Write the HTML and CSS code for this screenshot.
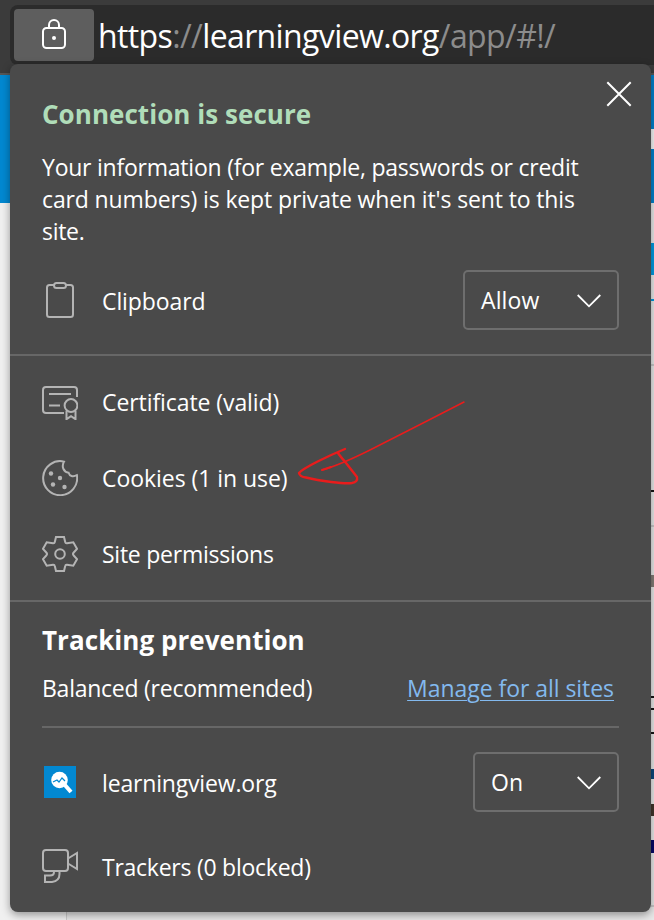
FILE: index.html
```html
<!DOCTYPE html>
<html lang="en">
<head>
<meta charset="utf-8">
<title>Site information</title>
<link rel="stylesheet" href="styles.css">
</head>
<body>
<header class="toolbar">
  <div class="address">
    <button class="lock" aria-label="View site information">
      <svg width="24" height="30" viewBox="0 0 24 30" fill="none" stroke="#fff" stroke-width="2"><rect x="1" y="9" width="22" height="20" rx="3.5"/><path d="M7 9V6a5 5 0 0 1 10 0v3"/><circle cx="12" cy="19" r="2" fill="#fff" stroke="none"/></svg>
    </button>
    <span class="url">https<i>://</i>learningview.org<i>/app/#!/</i></span>
  </div>
</header>
<main class="page">
  <div class="page-left"><div class="banner"></div></div>
  <div class="page-right">
    <div class="blue b1"></div><div class="white"></div><div class="blue b1"></div>
    <div class="gap g1"></div><div class="cyan"></div><div class="gap g2"></div><div class="cyan-line"></div>
    <div class="gap g3"></div><div class="gray-line"></div><div class="gap g4"></div><div class="ink"></div>
    <div class="gap g5"></div><div class="gray-line"></div><div class="gap g6"></div><div class="photo"></div>
    <div class="gap g7"></div><div class="ink"></div><div class="gap g8"></div><div class="ink"></div>
    <div class="gap g9"></div><div class="ink"></div><div class="gap g10"></div><div class="ink navy"></div>
    <div class="gap g11"></div><div class="ink gold"></div><div class="gap g12"></div><div class="ink deep"></div>
    <div class="gap g13"></div><div class="gray-line"></div>
  </div>
</main>

<section class="popup">
  <div class="summary">
    <div class="title-row">
      <h1>Connection is secure</h1>
      <svg class="close" width="26" height="26" viewBox="0 0 26 26" stroke="#fff" stroke-width="2"><path d="M1.3 1.3l23.4 23.4M24.7 1.3L1.3 24.7"/></svg>
    </div>
    <p><span class="l1">Your information (for example, passwords or credit</span><br><span class="l2">card numbers) is kept private when it's sent to this</span><br><span class="l3">site.</span></p>
    <div class="row clip-row">
      <svg class="icon" width="36" height="36" viewBox="0 0 36 36"><rect x="5" y="3" width="26" height="32" rx="2.5"/><rect x="12" y="1" width="12" height="5" rx="2.5" fill="#4a4a4a"/></svg>
      <span class="t-clip">Clipboard</span>
      <div class="select allow"><span>Allow</span><svg width="24" height="14" viewBox="0 0 24 14"><path d="M.7 1L12 12.3 23.3 1"/></svg></div>
    </div>
  </div>
  <div class="links">
    <div class="row">
      <svg class="icon" width="36" height="36" viewBox="0 0 36 36"><path d="M35 13V6a3 3 0 0 0-3-3H4a3 3 0 0 0-3 3v20a3 3 0 0 0 3 3h18M7 10h22M7 21.500h11"/><circle cx="29" cy="21.500" r="6.400"/><path d="M24.500 27v8.200l4.500-3 4.500 3V27"/></svg>
      <span class="t-cert">Certificate (valid)</span>
    </div>
    <div class="row">
      <svg class="icon" width="36" height="36" viewBox="0 0 36 36"><path d="M22 1.600A17 17 0 1 0 34.900 15.200c-4 2-7.300 1-8.300-2.500C22 12.200 19 7 22 1.600Z"/><g class="dots"><circle cx="9" cy="13.500" r="2.200"/><circle cx="18" cy="18" r="2.200"/><circle cx="11" cy="24.500" r="2.200"/><circle cx="22.500" cy="27" r="2.200"/></g></svg>
      <span class="t-cookie">Cookies (1 in use)</span>
    </div>
    <div class="row">
      <svg class="icon" width="36" height="36" viewBox="0 0 36 36"><path d="M14 1h8l1.200 5q.3 1.500 1.800 1.300L31.300 6.300 35 12.800 31.700 16.500q-1.400 1.500 0 3L35 23.200l-3.700 6.500L25 28.700q-1.500-.2-1.800 1.300L22 35h-8l-1.200-5q-.3-1.500-1.800-1.300L4.700 29.700 1 23.200 4.300 19.500q1.400-1.500 0-3L1 12.800 4.700 6.300 11 7.300q1.500.2 1.800-1.300Z"/><circle cx="18" cy="18" r="4.800"/></svg>
      <span class="t-perm">Site permissions</span>
    </div>
  </div>
  <div class="tracking">
    <h2>Tracking prevention</h2>
    <div class="level"><span class="t-bal">Balanced (recommended)</span><a class="manage">Manage for all sites</a></div>
    <div class="row site-row">
      <svg class="favicon" width="36" height="32" viewBox="0 0 36 32"><path fill="#0288d1" d="M2 0h32v32H2z"/><circle cx="17.500" cy="14" r="8.300" fill="#fff"/><path d="M22 18l7 8" stroke="#fff" stroke-width="4"/><path d="M11 16l4-2 2 2 3-4 3 3" fill="none" stroke="#0288d1" stroke-width="1.200"/></svg>
      <span class="t-site">learningview.org</span>
      <div class="select on"><span>On</span><svg width="24" height="14" viewBox="0 0 24 14"><path d="M.7 1L12 12.3 23.3 1"/></svg></div>
    </div>
    <div class="row trackers">
      <svg class="icon" width="36" height="36" viewBox="0 0 36 36"><rect x="1" y="2" width="25" height="21" rx="3"/><path d="M26 10.500l9-5.500v16l-9-5.500M12 23v1q0 3.500-4 3.500H3V34h7q7.500-1 7.500-8v-3"/></svg>
      <span class="t-track">Trackers (0 blocked)</span>
    </div>
  </div>
  <svg class="arrow" width="180" height="100" viewBox="290 395 180 100" fill="none" stroke="#e91c1c" stroke-linecap="round" stroke-linejoin="round"><path stroke-width="2.400" d="M345 449C328 456 303 468 299 473Q300 477 306 477.500C320 481 344 484 352 483Q358 482 357 477L346 463Q340 456 338 453"/><path stroke-width="1.500" d="M322 470Q340 465 370 450L425 422 464 402"/><path stroke-width="2" d="M322 470l9-3"/></svg>
</section>
</body>
</html>
```

FILE: styles.css
```css
* { box-sizing: border-box; }
body { margin: 0; width: 654px; height: 920px; overflow: hidden; position: relative; background: #e8e8e8; color: #fff; font-family: "Open Sans", "Noto Sans", sans-serif; font-size: 23px; white-space: nowrap; }
.toolbar { height: 75px; padding: 5px 0 0 10px; background: #3b3b3b; border-bottom: 2px solid #555; }
.address { height: 60px; padding: 4px; display: flex; align-items: flex-start; background: #2b2b2b; border-radius: 8px 0 0 8px; }
.lock { width: 80px; height: 52px; padding: 0 0 2px; border: 0; border-radius: 4px; background: #5e5e5e; display: flex; align-items: center; justify-content: center; }
.url { margin-left: 4px; font-size: 32px; line-height: 54px; letter-spacing: -.62px; }
.url i { font-style: normal; color: #8c8c8c; }
.page { height: 845px; display: flex; justify-content: space-between; }
.page-left { width: 67px; background: #f0f0f0; border-right: 1px solid #ccc; }
.banner { height: 128px; background: #0288d1; }
.page-right { width: 3px; background: #e8e8e8; }
.blue { background: #0281cb; }
.b1 { height: 54px; }
.white { height: 20px; background: #f4f4f4; }
.cyan { height: 32px; background: #029ae0; }
.cyan-line { height: 2px; background: #029ae0; }
.gray-line { height: 2px; background: #c8c8c8; }
.ink { height: 2px; background: #161616; }
.photo { height: 12px; background: #827b75; }
.navy { height: 10px; background: #0d477b; }
.gold { height: 12px; background: #40352b; }
.deep { height: 13px; background: #060866; }
.g1 { height: 40px; } .g2 { height: 24px; } .g3 { height: 63px; } .g4 { height: 124px; }
.g5 { height: 33px; } .g6 { height: 48px; } .g7 { height: 109px; } .g8 { height: 10px; }
.g9 { height: 22px; } .g10 { height: 35px; } .g11 { height: 25px; } .g12 { height: 24px; } .g13 { height: 52px; }

.popup { position: absolute; left: 10px; top: 64px; width: 641px; height: 848px; background: #4a4a4a; border-radius: 8px; box-shadow: 0 3px 9px rgba(0,0,0,.38); }
.summary { height: 292px; padding: 0 32px; border-bottom: 2px solid #676767; }
.title-row { height: 87px; display: flex; justify-content: space-between; padding-top: 17px; }
h1, h2 { margin: 0; font-size: 26px; font-weight: 700; letter-spacing: .05px; }
h1 { color: #b0ddb9; line-height: 66px; }
.close { margin-right: -13px; }
p { margin: 0; line-height: 32px; letter-spacing: -.3px; }
.l1 { letter-spacing: -.23px; }
.l2 { letter-spacing: -.13px; }
.row { display: flex; align-items: center; height: 76px; }
.icon { flex: none; fill: none; stroke: #b4b4b4; stroke-width: 2; }
.dots { fill: #b4b4b4; stroke: none; }
.row > span { margin-left: 24px; letter-spacing: -.25px; }
.row > .t-clip { letter-spacing: -.1px; padding-top: 2px; }
.row > .t-cert { letter-spacing: -.08px; padding-bottom: 1px; }
.row > .t-cookie { letter-spacing: -.05px; padding-bottom: 1px; }
.row > .t-perm { padding-bottom: 1px; }
.row > .t-site { letter-spacing: -.17px; padding-top: 2px; }
.row > .t-track { padding-top: 2px; }
.clip-row { height: 106px; }
.select { height: 60px; margin-left: auto; padding: 0 16px 1px; border: 2px solid #6e6e6e; border-radius: 5px; display: flex; align-items: center; justify-content: space-between; letter-spacing: .1px; }
.select svg { fill: none; stroke: #fff; stroke-width: 1.8; position: relative; top: 1px; }
.allow { width: 156px; }
.on { width: 146px; }
.links { height: 246px; padding: 8px 32px; border-bottom: 2px solid #676767; }
.tracking { padding: 0 32px; }
h2 { line-height: 76px; height: 66px; }
.level { height: 60px; padding: 0 5px 19px 0; display: flex; justify-content: space-between; align-items: center; letter-spacing: -.25px; border-bottom: 2px solid #676767; }
.manage { color: #83b9ee; letter-spacing: -.05px; text-decoration: underline; text-decoration-thickness: 1px; text-underline-offset: 3px; }
.site-row { height: 108px; }
.trackers { height: 60px; }
.arrow { position: absolute; left: 280px; top: 331px; }
```
